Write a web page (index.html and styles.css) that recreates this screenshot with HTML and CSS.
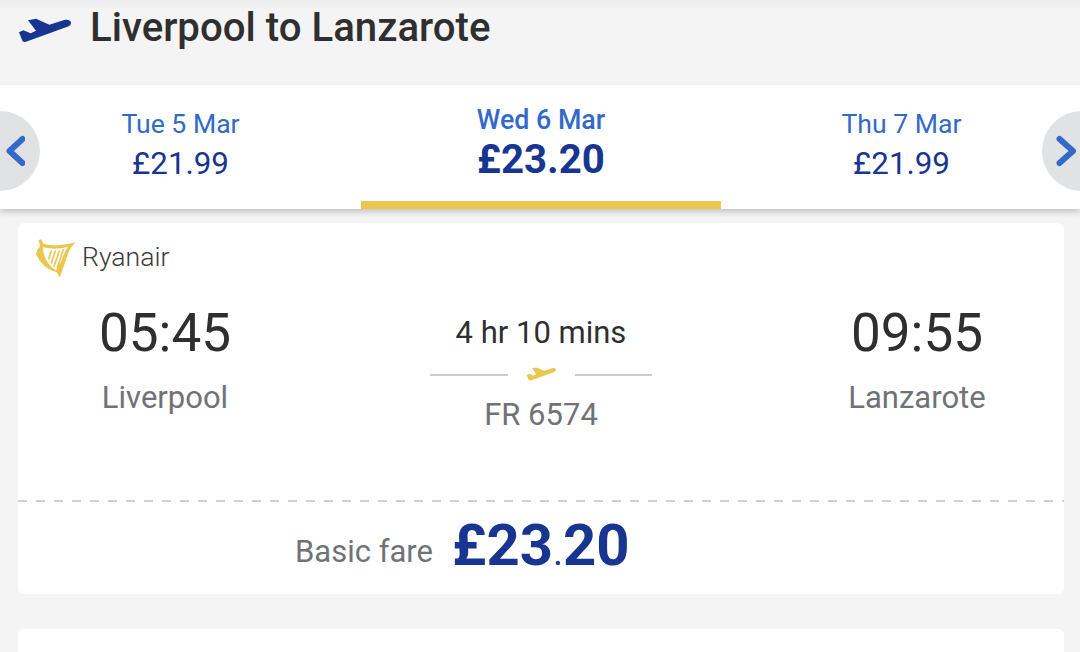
FILE: index.html
```html
<!DOCTYPE html>
<html lang="en">
<head>
<meta charset="utf-8">
<title>Liverpool to Lanzarote</title>
<link rel="stylesheet" href="styles.css">
</head>
<body>
<header class="top">
  <svg class="plane-lg" viewBox="24 24 162 74"><path d="M27 66 40 60 62 69 78 62 54 30 78 26 118 44 165 29Q180 27 183 37 184 45 172 50L48 95Q40 97 37 92Z"/></svg>
  <h1 class="title">Liverpool to Lanzarote</h1>
</header>
<nav class="dates">
  <div class="day"><span class="day-name">Tue 5 Mar</span><span class="day-price">£21.99</span></div>
  <div class="day day-active"><span class="day-name">Wed 6 Mar</span><span class="day-price">£23.20</span></div>
  <div class="day day-last"><span class="day-name">Thu 7 Mar</span><span class="day-price">£21.99</span></div>
  <div class="nav-btn nav-prev"><svg viewBox="0 0 20 32"><path d="M17.500 4 4.500 16l13 12"/></svg></div>
  <div class="nav-btn nav-next"><svg viewBox="0 0 20 32"><path d="M3.500 4 17 16 3.500 28"/></svg></div>
</nav>
<main class="list">
  <section class="card">
    <div class="airline">
      <svg class="harp" viewBox="0 0 120 117"><path class="harp-fill" d="M0 46Q3 30 12 22L8 3 16 1 22 14Q60 26 120 10 106 20 96 44L72 115 62 100Q20 90 0 46Z"/><path class="harp-cut" d="M20 24Q55 34 96 24 84 40 76 66L60 94Q24 72 20 24Z"/><path class="harp-str" d="M46 36 38 60M58 36 46 72M70 36 54 82M82 32 64 86"/></svg>
      <span class="airline-name">Ryanair</span>
    </div>
    <div class="route">
      <div class="stop"><span class="time">05:45</span><span class="place">Liverpool</span></div>
      <div class="mid">
        <span class="duration">4 hr 10 mins</span>
        <div class="path"><span class="line"></span><svg class="plane-sm" viewBox="24 24 162 74"><path d="M27 66 40 60 62 69 78 62 54 30 78 26 118 44 165 29Q180 27 183 37 184 45 172 50L48 95Q40 97 37 92Z"/></svg><span class="line line-end"></span></div>
        <span class="flight">FR 6574</span>
      </div>
      <div class="stop"><span class="time">09:55</span><span class="place">Lanzarote</span></div>
    </div>
    <div class="fare">
      <span class="fare-label">Basic fare</span>
      <span class="fare-price">£23<span class="fare-dot">.</span>20</span>
    </div>
  </section>
  <section class="card card-next"></section>
</main>
</body>
</html>
```
FILE: styles.css
```css
* { box-sizing: border-box; }
html, body { margin: 0; padding: 0; }
body {
  width: 1080px;
  height: 652px;
  overflow: hidden;
  background: #f4f4f4;
  font-family: Roboto, "Liberation Sans", sans-serif;
}
.top {
  height: 85px;
  display: flex;
  align-items: flex-start;
  padding: 7px 0 0 18px;
  background: linear-gradient(#ececec, #f4f4f4 10px);
}
.plane-lg { width: 54px; height: 25px; margin-top: 11px; fill: #173591; flex: none; }
.title {
  margin: 0 0 0 18px;
  font-size: 40.200px;
  line-height: 42px;
  font-weight: 500;
  color: #2f2f2f;
}
.dates {
  position: relative;
  height: 124px;
  display: grid;
  grid-template-columns: 361px 360px 359px;
  background: #fff;
  box-shadow: 0 3px 6px rgba(0,0,0,.2);
}
.day {
  display: flex;
  flex-direction: column;
  align-items: center;
  padding-top: 24px;
}
.day-last { padding-left: 2px; }
.day-name { font-size: 26.600px; line-height: 30px; color: #3369c9; }
.day-price { font-size: 31.300px; line-height: 36px; margin-top: 7px; color: #173591; }
.day-active { padding-top: 20px; border-bottom: 8px solid #eac84f; }
.day-active .day-name { font-weight: 500; font-size: 26.800px; }
.day-active .day-price { font-size: 40.200px; font-weight: 700; line-height: 42px; margin-top: 4px; }
.nav-btn {
  position: absolute;
  top: 26px;
  width: 80px;
  height: 80px;
  border-radius: 50%;
  background: #e0e2e4;
}
.nav-btn svg { position: absolute; top: 24px; width: 20px; height: 32px; }
.nav-btn path { fill: none; stroke: #3369c9; stroke-width: 6; stroke-linecap: round; stroke-linejoin: round; }
.nav-prev { left: -40px; }
.nav-prev svg { left: 45px; }
.nav-next { right: -42px; }
.nav-next svg { left: 14px; }
.list { padding: 14px 16px 0 18px; }
.card { background: #fff; border-radius: 6px; height: 371px; }
.card-next { margin-top: 35px; height: 23px; border-radius: 6px 6px 0 0; }
.airline { display: flex; align-items: center; padding: 12px 0 0 18px; height: 55px; }
.harp { width: 40px; height: 39px; flex: none; margin-top: 3px; }
.harp-fill { fill: #eac84f; }
.harp-cut { fill: #fff; }
.harp-str { fill: none; stroke: #eac84f; stroke-width: 5; stroke-linecap: round; }
.airline-name { margin-left: 6px; font-size: 26.600px; font-weight: 300; color: #3a3a3a; }
.route { display: grid; grid-template-columns: 294px 458px 294px; height: 222px; padding-top: 25px; align-content: start; }
.stop { display: flex; flex-direction: column; align-items: center; }
.time { font-size: 53px; line-height: 60px; color: #2f2f2f; }
.place { font-size: 31px; line-height: 34px; margin-top: 18px; color: #707278; }
.mid { display: flex; flex-direction: column; align-items: center; padding-top: 13px; }
.duration { font-size: 31px; line-height: 34px; color: #2f2f2f; }
.path { display: flex; align-items: center; margin-top: 13px; height: 24px; }
.line { width: 78px; height: 2px; background: #c9ccd1; }
.line-end { width: 77px; }
.plane-sm { width: 31px; height: 14px; margin: -2px 18px 0; fill: #eac84f; }
.flight { font-size: 31px; line-height: 34px; margin-top: 11px; color: #707278; }
.fare {
  display: flex;
  align-items: flex-start;
  gap: 19px;
  height: 94px;
  padding: 11px 0 0 277px;
  background: repeating-linear-gradient(90deg, #cfd0d6 0 9px, transparent 9px 18px) top / 100% 2px no-repeat;
}
.fare-label { font-size: 31px; line-height: 36px; margin-top: 23px; color: #707278; }
.fare-price { font-size: 58px; font-weight: 700; color: #173591; }
.fare-dot { font-weight: 400; font-size: 38px; }
```
